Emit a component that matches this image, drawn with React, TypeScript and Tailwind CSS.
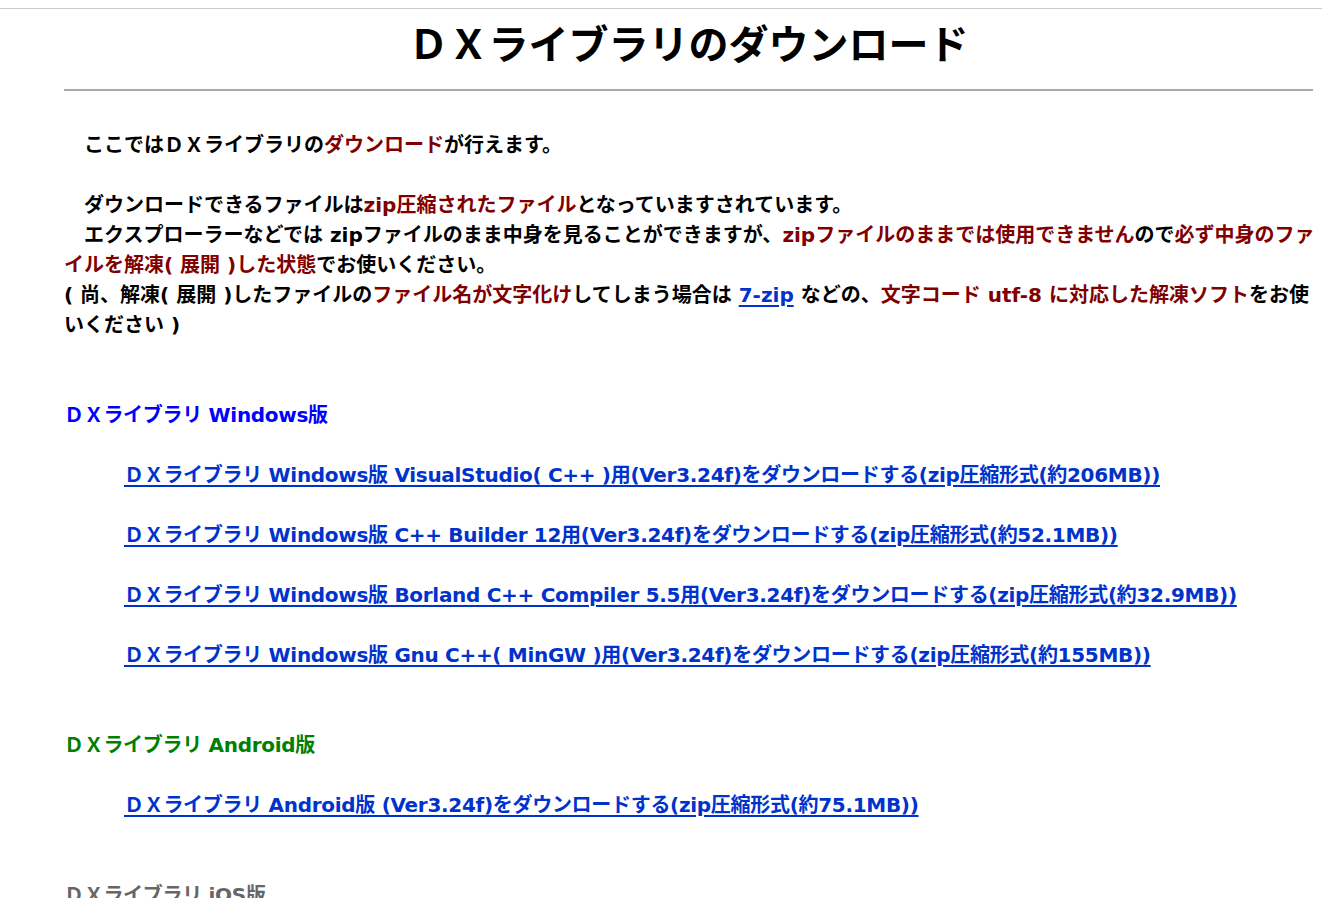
import React from 'react';

const FONT = "font-['DejaVu_Sans','Noto_Sans_CJK_JP',sans-serif]";

type Part = string | { red: string } | { link: string };

function Line({ parts }: { parts: Part[] }) {
  return (
    <div className="whitespace-nowrap">
      {parts.map((p, i) => {
        if (typeof p === 'string') return <span key={i}>{p}</span>;
        if ('red' in p) return <span key={i} className="text-[#800000]">{p.red}</span>;
        return (
          <a key={i} href="#" className="text-[#0033cc] underline underline-offset-[3px]">
            {p.link}
          </a>
        );
      })}
    </div>
  );
}

const WINDOWS_LINKS = [
  'ＤＸライブラリ Windows版 VisualStudio( C++ )用(Ver3.24f)をダウンロードする(zip圧縮形式(約206MB))',
  'ＤＸライブラリ Windows版 C++ Builder 12用(Ver3.24f)をダウンロードする(zip圧縮形式(約52.1MB))',
  'ＤＸライブラリ Windows版 Borland C++ Compiler 5.5用(Ver3.24f)をダウンロードする(zip圧縮形式(約32.9MB))',
  'ＤＸライブラリ Windows版 Gnu C++( MinGW )用(Ver3.24f)をダウンロードする(zip圧縮形式(約155MB))',
];

function DownloadLink({ label }: { label: string }) {
  return (
    <div className="mt-[30px] pl-[60px] whitespace-nowrap tracking-[-0.3px]">
      <a href="#" className="text-[#0033cc] underline underline-offset-[3px]">
        {label}
      </a>
    </div>
  );
}

export default function App() {
  return (
    <div className={`min-h-[898px] bg-white text-black ${FONT} font-bold`}>
      <div className="h-2" />
      <div className="border-t border-[#cccccc]" />
      <div className="ml-16 mr-[9px]">
        <h1 className="mt-[6px] text-center text-[40px] leading-[60px] font-bold">
          ＤＸライブラリのダウンロード
        </h1>
        <div className="mt-[14px] h-[2px] bg-[#a8a8a8]" />

        <div className="mt-[39px] text-[20px] leading-[30px]">
          <Line parts={['　ここではＤＸライブラリの', { red: 'ダウンロード' }, 'が行えます。']} />
          <div className="h-[30px]" />
          <Line
            parts={[
              '　ダウンロードできるファイルは',
              { red: 'zip圧縮されたファイル' },
              'となっていますされています。',
            ]}
          />
          <Line
            parts={[
              '　エクスプローラーなどでは zipファイルのまま中身を見ることができますが、',
              { red: 'zipファイルのままでは使用できません' },
              'ので',
              { red: '必ず中身のファ' },
            ]}
          />
          <Line parts={[{ red: 'イルを解凍( 展開 )した状態' }, 'でお使いください。']} />
          <Line
            parts={[
              '( 尚、解凍( 展開 )したファイルの',
              { red: 'ファイル名が文字化け' },
              'してしまう場合は ',
              { link: '7-zip' },
              ' などの、',
              { red: '文字コード utf-8 に対応した解凍ソフト' },
              'をお使',
            ]}
          />
          <Line parts={['いください )']} />

          <div className="mt-[60px] text-[#0000ff] tracking-[-0.3px]">ＤＸライブラリ Windows版</div>
          {WINDOWS_LINKS.map((l) => (
            <DownloadLink key={l} label={l} />
          ))}

          <div className="mt-[60px] text-[#008000] tracking-[-0.3px]">ＤＸライブラリ Android版</div>
          <DownloadLink label="ＤＸライブラリ Android版 (Ver3.24f)をダウンロードする(zip圧縮形式(約75.1MB))" />

          <div className="mt-[60px] text-[#666666] tracking-[-0.3px]">ＤＸライブラリ iOS版</div>
        </div>
      </div>
    </div>
  );
}
